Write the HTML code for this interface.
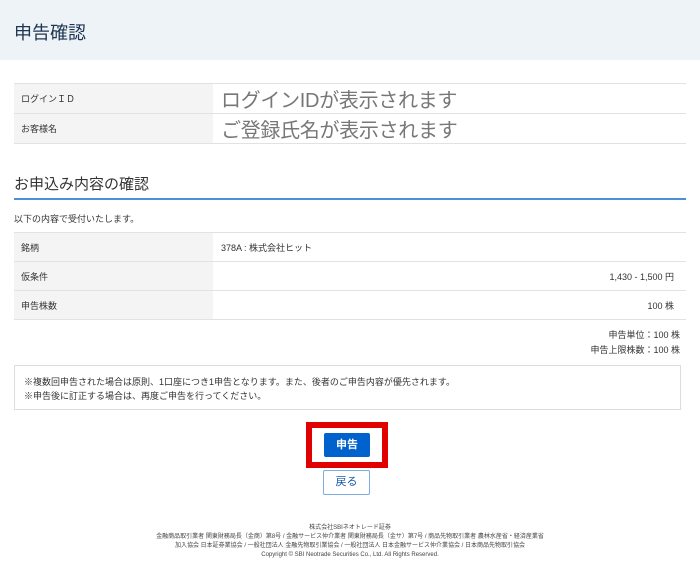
<!DOCTYPE html>
<html><head><meta charset="utf-8"><style>
*{margin:0;padding:0;box-sizing:border-box}
body{width:700px;height:565px;background:#fff;font-family:"Liberation Sans","Noto Sans CJK JP",sans-serif;color:#333;position:relative;overflow:hidden}
.hd{position:absolute;left:0;top:0;width:700px;height:60px;background:#eef3f8}
.hd h1{position:absolute;left:14px;top:19px;font-size:18px;font-weight:normal;color:#1e3550}
.abs{position:absolute}
table{border-collapse:collapse;position:absolute;left:14px;width:672px}
td{border-top:1px solid #e2e2e2;border-bottom:1px solid #e2e2e2;height:29px;font-size:9px;vertical-align:middle}
td.l{background:#f4f4f4;width:199px;padding-left:7px}
td.v{padding:0 8px}
.big{font-size:20px;color:#777;letter-spacing:-0.3px}
</style></head><body>
<div class="hd"><h1>申告確認</h1></div>
<table style="top:83px">
<tr><td class="l">ログインＩＤ</td><td class="v big">ログインIDが表示されます</td></tr>
<tr><td class="l">お客様名</td><td class="v big">ご登録氏名が表示されます</td></tr>
</table>
<div class="abs" style="left:14px;top:173px;font-size:15px;color:#333">お申込み内容の確認</div>
<div class="abs" style="left:14px;top:198px;width:672px;height:2px;background:#4a8fd8"></div>
<div class="abs" style="left:14px;top:212px;font-size:9px">以下の内容で受付いたします。</div>
<table style="top:232px">
<tr><td class="l">銘柄</td><td class="v">378A : 株式会社ヒット</td></tr>
<tr><td class="l">仮条件</td><td class="v" style="text-align:right;padding-right:12px">1,430 - 1,500 円</td></tr>
<tr><td class="l">申告株数</td><td class="v" style="text-align:right;padding-right:12px">100 株</td></tr>
</table>
<div class="abs" style="right:20px;top:328px;font-size:9px;text-align:right;line-height:15px">申告単位：100 株<br>申告上限株数：100 株</div>
<div class="abs" style="left:14px;top:365px;width:667px;height:45px;border:1px solid #ddd;font-size:9px;padding:9px 0 0 9px;line-height:14px">※複数回申告された場合は原則、1口座につき1申告となります。また、後者のご申告内容が優先されます。<br>※申告後に訂正する場合は、再度ご申告を行ってください。</div>
<div class="abs" style="left:306px;top:422px;width:82px;height:46px;border:6px solid #e00000"></div>
<div class="abs" style="left:324px;top:433px;width:46px;height:24px;background:#0062cc;border-radius:2px;color:#fff;font-size:11px;font-weight:bold;text-align:center;line-height:24px">申告</div>
<div class="abs" style="left:323px;top:470px;width:47px;height:25px;border:1px solid #7aaee0;border-radius:2px;color:#1a5aa8;font-size:11px;text-align:center;line-height:23px">戻る</div>
<div class="abs" style="left:0;top:524px;width:700px;text-align:center;font-size:6px;line-height:9px;color:#444">株式会社SBIネオトレード証券<br>金融商品取引業者 関東財務局長（金商）第8号 / 金融サービス仲介業者 関東財務局長（金サ）第7号 / 商品先物取引業者 農林水産省・経済産業省<br>加入協会 日本証券業協会 / 一般社団法人 金融先物取引業協会 / 一般社団法人 日本金融サービス仲介業協会 / 日本商品先物取引協会<br>Copyright © SBI Neotrade Securities Co., Ltd. All Rights Reserved.</div>
</body></html>
